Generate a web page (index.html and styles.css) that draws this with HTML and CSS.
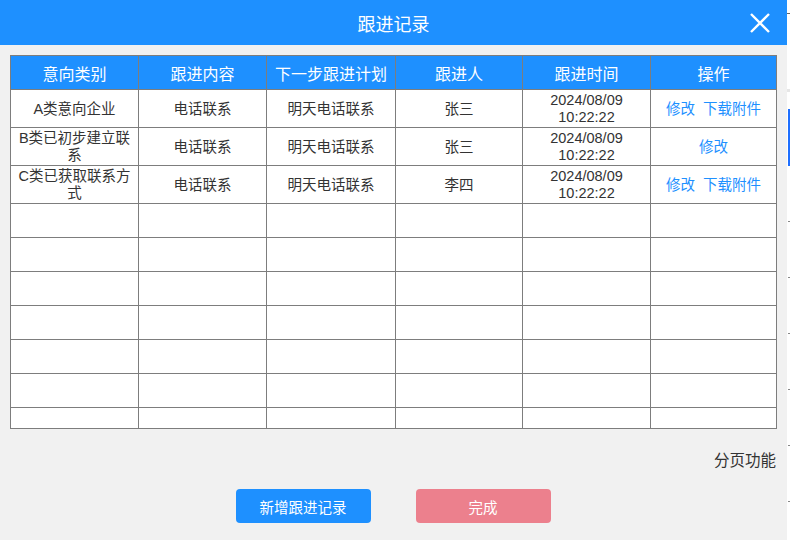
FILE: index.html
```html
<!DOCTYPE html>
<html lang="zh-CN">
<head>
  <meta charset="UTF-8" />
  <meta name="viewport" content="width=device-width, initial-scale=1.0"/>
  <title>跟进记录</title>
  <link rel="stylesheet" href="styles.css">
</head>
<body>

  <div class="dialog">
    <div class="dialog-header">
      <h2>跟进记录</h2>
      <button type="button" class="close-btn" aria-label="关闭">
        <svg width="22" height="22" viewBox="0 0 22 22">
          <path d="M2 2 L20 20 M20 2 L2 20" stroke="#fff" stroke-width="2.4" fill="none" />
        </svg>
      </button>
    </div>

    <div class="dialog-body">
      <table class="record-table">
        <colgroup>
          <col class="col-a">
          <col class="col-b">
          <col class="col-c">
          <col class="col-d">
          <col class="col-e">
          <col class="col-f">
        </colgroup>
        <thead>
          <tr>
            <th>意向类别</th>
            <th>跟进内容</th>
            <th>下一步跟进计划</th>
            <th>跟进人</th>
            <th>跟进时间</th>
            <th>操作</th>
          </tr>
        </thead>
        <tbody>
          <tr class="data-row">
            <td>A类意向企业</td>
            <td>电话联系</td>
            <td>明天电话联系</td>
            <td>张三</td>
            <td>2024/08/09<br>10:22:22</td>
            <td><a href="#">修改</a><a href="#">下载附件</a></td>
          </tr>
          <tr class="data-row">
            <td>B类已初步建立联系</td>
            <td>电话联系</td>
            <td>明天电话联系</td>
            <td>张三</td>
            <td>2024/08/09<br>10:22:22</td>
            <td><a href="#">修改</a></td>
          </tr>
          <tr class="data-row">
            <td>C类已获取联系方式</td>
            <td>电话联系</td>
            <td>明天电话联系</td>
            <td>李四</td>
            <td>2024/08/09<br>10:22:22</td>
            <td><a href="#">修改</a><a href="#">下载附件</a></td>
          </tr>
          <tr class="empty-row"><td></td><td></td><td></td><td></td><td></td><td></td></tr>
          <tr class="empty-row"><td></td><td></td><td></td><td></td><td></td><td></td></tr>
          <tr class="empty-row"><td></td><td></td><td></td><td></td><td></td><td></td></tr>
          <tr class="empty-row"><td></td><td></td><td></td><td></td><td></td><td></td></tr>
          <tr class="empty-row"><td></td><td></td><td></td><td></td><td></td><td></td></tr>
          <tr class="empty-row"><td></td><td></td><td></td><td></td><td></td><td></td></tr>
          <tr class="last-row"><td></td><td></td><td></td><td></td><td></td><td></td></tr>
        </tbody>
      </table>

      <div class="pager">分页功能</div>

      <div class="button-group">
        <button type="button" class="add-btn">新增跟进记录</button>
        <button type="button" class="done-btn">完成</button>
      </div>
    </div>
  </div>

  <!-- page behind the dialog -->
  <div class="page-edge">
    <div class="edge-line"></div>
    <div class="edge-band"></div>
    <div class="edge-tab"></div>
    <div class="edge-tick"></div>
    <div class="edge-tick"></div>
    <div class="edge-tick"></div>
    <div class="edge-tick"></div>
    <div class="edge-tick"></div>
    <div class="edge-tick"></div>
  </div>

</body>
</html>
```

FILE: styles.css
```css
body {
  font-family: "Liberation Sans", "Noto Sans CJK SC", sans-serif;
  background: #fff;
  margin: 0;
  padding: 0;
  display: flex;
  height: 540px;
  overflow: hidden;
}

.dialog {
  width: 787px;
  height: 540px;
  background: #f1f1f1;
  display: flex;
  flex-direction: column;
}

.dialog-header {
  height: 45px;
  background: #1e90ff;
  display: flex;
  align-items: center;
  justify-content: center;
  position: relative;
}

.dialog-header h2 {
  margin: 0;
  color: #fff;
  font-size: 18px;
  font-weight: normal;
  font-family: "Noto Sans CJK SC", sans-serif;
}

.close-btn {
  position: absolute;
  right: 16px;
  top: 12px;
  width: 22px;
  height: 22px;
  padding: 0;
  border: none;
  background: none;
  cursor: pointer;
}

.close-btn svg {
  display: block;
}

.dialog-body {
  padding: 10px 11px 0 10px;
}

.record-table {
  width: 766px;
  table-layout: fixed;
  border-collapse: collapse;
  background: #fff;
  font-size: 14.5px;
  color: #333;
}

.col-a { width: 128px; }
.col-b { width: 128px; }
.col-c { width: 129px; }
.col-d { width: 127px; }
.col-e { width: 128px; }
.col-f { width: 126px; }

.record-table th,
.record-table td {
  border: 1.5px solid #7d7d7d;
  padding: 1px 3px 0;
  text-align: center;
  line-height: 17px;
  font-weight: normal;
}

.record-table thead tr {
  height: 34px;
}

.record-table th {
  background: #1e90ff;
  color: #fff;
  font-size: 16px;
  font-family: "Noto Sans CJK SC", sans-serif;
}

.data-row {
  height: 38px;
}

.empty-row {
  height: 34px;
}

.last-row {
  height: 21px;
}

.record-table a {
  color: #1e90ff;
  text-decoration: none;
  margin: 0 4px;
}

.pager {
  text-align: right;
  margin-top: 22px;
  font-size: 15.5px;
  line-height: 20px;
  color: #333;
}

.button-group {
  display: flex;
  justify-content: center;
  gap: 45px;
  margin-top: 18px;
}

.add-btn, .done-btn {
  width: 135px;
  height: 34px;
  border: none;
  border-radius: 4px;
  color: #fff;
  font-size: 14.5px;
  font-family: "Noto Sans CJK SC", sans-serif;
  cursor: pointer;
}

.add-btn {
  background: #1e90ff;
}

.done-btn {
  background: #ec808d;
}

.page-edge {
  flex: 1;
  display: flex;
  flex-direction: column;
}

.edge-line {
  margin-top: 13px;
  height: 1px;
  background: #666;
}

.edge-band {
  margin-top: 75px;
  height: 3px;
  background: #e6e6e6;
}

.edge-tab {
  margin-top: 17px;
  margin-left: 1px;
  height: 57px;
  background: #1e6fff;
}

.edge-tick {
  margin-top: 55px;
  margin-left: 1px;
  height: 1px;
  background: #888;
}
```
